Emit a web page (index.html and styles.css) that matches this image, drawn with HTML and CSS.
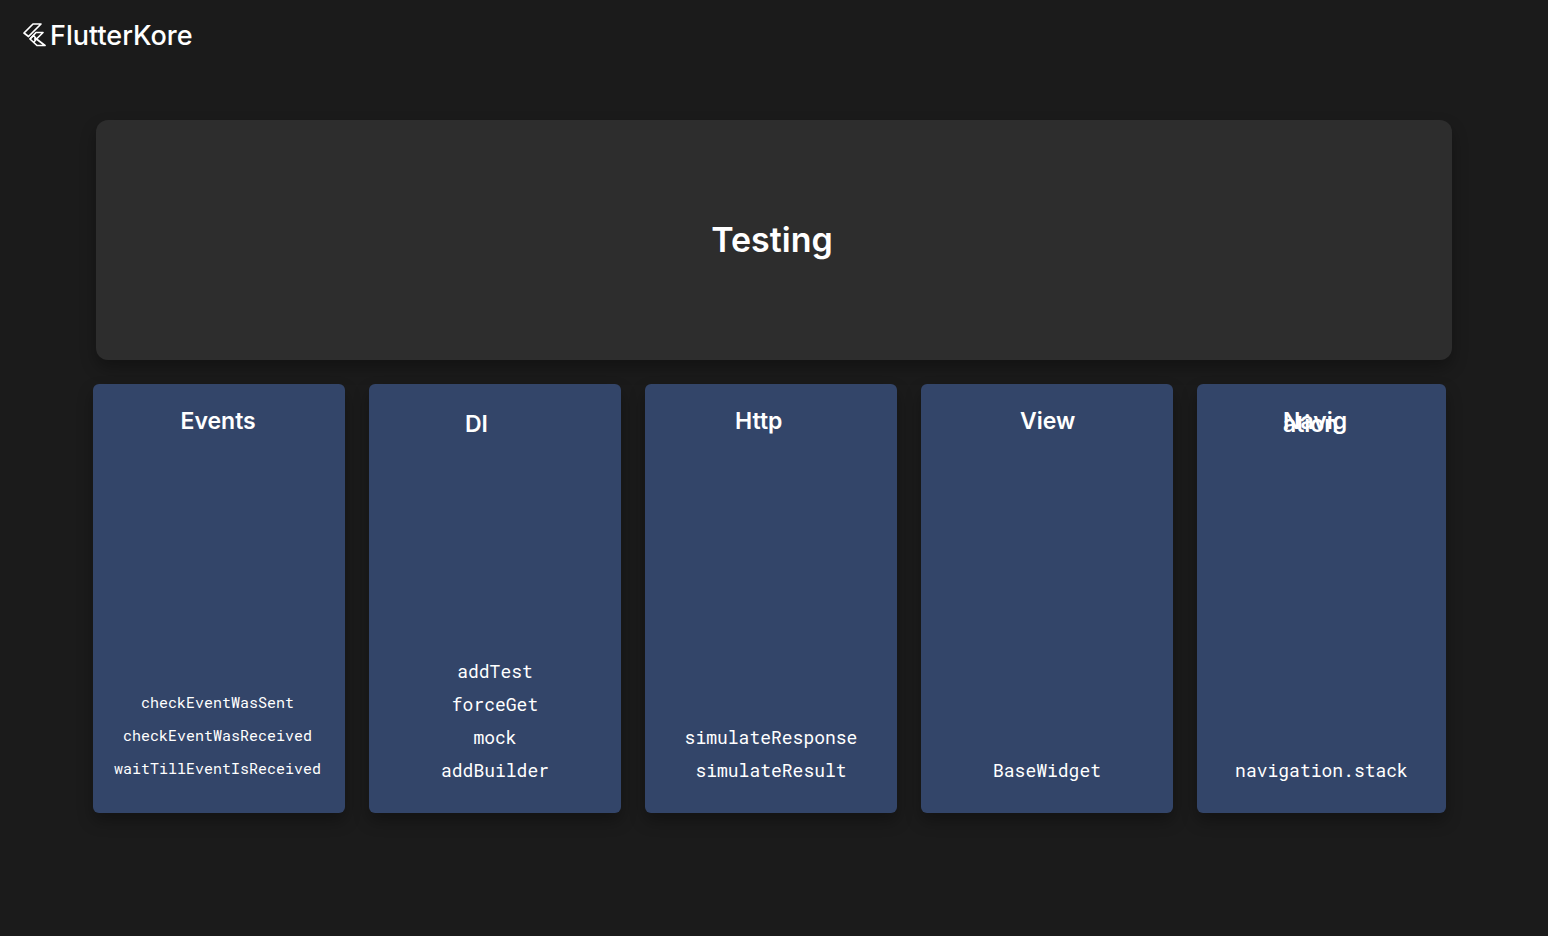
FILE: index.html
```html
<!DOCTYPE html>
<html lang="en">
<head>
<meta charset="utf-8">
<meta name="viewport" content="width=device-width, initial-scale=1">
<title>FlutterKore – Testing</title>
<link rel="stylesheet" href="styles.css">
</head>
<body>
<header class="brand">
  <svg class="brand-mark" viewBox="0 0 24 24" aria-hidden="true">
    <path d="M11 1H19L6.500 13.500L2 10Z"/>
    <path d="M14 9.500H21L14.500 16L23 22.500H15L8 16Z"/>
    <path d="M8 16L11.500 12.500L14.500 16L11.500 19.500M14.500 16H12"/>
  </svg>
  <span class="brand-name">FlutterKore</span>
</header>
<main>
  <section class="hero"><h1>Testing</h1></section>
  <section class="cards">
    <article class="card">
      <h2 class="title title-xl">Events</h2>
      <ul class="items items-small">
        <li>checkEventWasSent</li>
        <li>checkEventWasReceived</li>
        <li>waitTillEventIsReceived</li>
      </ul>
    </article>
    <article class="card">
      <h2 class="title title-m"><br>DI</h2>
      <ul class="items">
        <li>addTest</li>
        <li>forceGet</li>
        <li>mock</li>
        <li>addBuilder</li>
      </ul>
    </article>
    <article class="card">
      <h2 class="title title-l">Http</h2>
      <ul class="items">
        <li>simulateResponse</li>
        <li>simulateResult</li>
      </ul>
    </article>
    <article class="card">
      <h2 class="title title-s">View</h2>
      <ul class="items"><li>BaseWidget</li></ul>
    </article>
    <article class="card">
      <h2 class="title title-xl">Navig<br>ation</h2>
      <ul class="items"><li>navigation.stack</li></ul>
    </article>
  </section>
</main>
</body>
</html>
```
FILE: styles.css
```css
* { box-sizing: border-box; }

body {
  margin: 0;
  min-height: 100vh;
  background: #1b1b1b;
  color: #fff;
  font-family: Inter, "Liberation Sans", sans-serif;
}

.brand {
  display: flex;
  align-items: center;
  gap: 4px;
  height: 70px;
  padding: 0 22px;
}
.brand-mark {
  width: 24px;
  height: 24px;
  fill: none;
  stroke: #fff;
  stroke-width: 1.7;
  stroke-linejoin: round;
}
.brand-name { font-size: 27px; font-weight: 500; }

main { padding-top: 50px; }

.hero {
  display: grid;
  place-items: center;
  min-height: 240px;
  margin: 0 96px 24px;
  padding-right: 4px;
  border-radius: 12px;
  background: #2d2d2d;
  box-shadow: 0 8px 16px rgba(0, 0, 0, 0.3);
}
.hero h1 { margin: 0; font-size: 34px; font-weight: 600; line-height: 40px; }

.cards {
  display: grid;
  grid-template-columns: repeat(4, 252fr) 249fr;
  gap: 24px;
  padding: 0 102px 48px 93px;
}
.card {
  display: flex;
  flex-direction: column;
  align-items: center;
  justify-content: space-between;
  min-height: 429px;
  padding: 36px 0 26px;
  border-radius: 6px;
  background: #334569;
  box-shadow: 0 8px 16px rgba(0, 0, 0, 0.3);
}

/* Tight leading makes the second line of a title overlap the first. */
.title { margin: 0; font-size: 23px; font-weight: 600; line-height: 3px; white-space: nowrap; }
.title-s { width: 54px; }
.title-m { width: 60px; }
.title-l { width: 72px; }
.title-xl { width: 77px; }

.items {
  margin: 0;
  padding: 0;
  list-style: none;
  text-align: center;
  font-family: "Roboto Mono", "Liberation Mono", monospace;
  font-size: 18px;
  line-height: 33px;
}
.items-small { padding: 0 3px 2px 0; font-size: 15px; }
```
